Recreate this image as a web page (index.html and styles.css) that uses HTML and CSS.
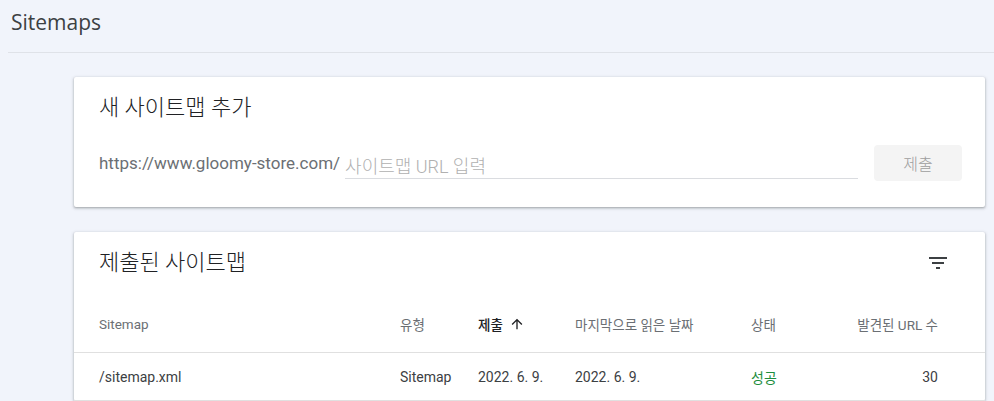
FILE: index.html
```html
<!DOCTYPE html>
<html lang="ko">
<head>
<meta charset="utf-8">
<title>Sitemaps</title>
<link rel="stylesheet" href="styles.css">
</head>
<body>
<header class="page-header">
  <h1 class="page-title">Sitemaps</h1>
</header>
<main class="content">
  <section class="card add-card">
    <h2 class="card-title">새 사이트맵 추가</h2>
    <div class="add-row">
      <span class="base-url">https://www.gloomy-store.com/</span>
      <div class="input-wrap"><input class="url-input" type="text" placeholder="사이트맵 URL 입력"></div>
      <button class="submit-btn" type="button">제출</button>
    </div>
  </section>
  <section class="card list-card">
    <div class="list-head">
      <h2 class="card-title">제출된 사이트맵</h2>
      <span class="filter-btn">
        <svg width="24" height="24" viewBox="0 0 24 24"><path d="M10 18h4v-2h-4v2zM3 6v2h18V6H3zm3 7h12v-2H6v2z" fill="#3c4043"/></svg>
      </span>
    </div>
    <div class="table">
      <div class="trow thead">
        <span class="cell">Sitemap</span>
        <span class="cell">유형</span>
        <span class="cell sorted">제출
          <svg class="sort-arrow" width="16" height="16" viewBox="0 0 24 24"><path d="M4 12l1.41 1.41L11 7.83V20h2V7.83l5.58 5.59L20 12l-8-8-8 8z" fill="#202124"/></svg>
        </span>
        <span class="cell">마지막으로 읽은 날짜</span>
        <span class="cell">상태</span>
        <span class="cell num">발견된 URL 수</span>
      </div>
      <div class="trow tbody">
        <span class="cell">/sitemap.xml</span>
        <span class="cell">Sitemap</span>
        <span class="cell">2022. 6. 9.</span>
        <span class="cell">2022. 6. 9.</span>
        <span class="cell ok">성공</span>
        <span class="cell num">30</span>
      </div>
    </div>
  </section>
</main>
</body>
</html>
```

FILE: styles.css
```css
* { box-sizing: border-box; }
html, body { margin: 0; padding: 0; }
body {
  background: #f1f4fb;
  font-family: Roboto, "Noto Sans CJK KR", sans-serif;
  color: #202124;
  width: 994px;
  height: 401px;
  overflow: hidden;
}
.page-header {
  margin-left: 8px;
  height: 53px;
  border-bottom: 1px solid #dfe2e8;
  padding: 8px 0 0 3px;
}
.page-title {
  margin: 0;
  font-family: "Open Sans", Roboto, sans-serif;
  font-weight: 500;
  font-size: 21px;
  line-height: 28px;
  color: #3c4043;
}
.content {
  padding: 24px 9px 0 74px;
  display: flex;
  flex-direction: column;
  gap: 25px;
}
.card {
  background: #fff;
  border-radius: 2px;
  box-shadow: 0 1px 2px rgba(60,64,67,.3), 0 1px 3px 1px rgba(60,64,67,.15);
}
.add-card {
  height: 130px;
  padding: 17px 23px 0 25px;
}
.card-title {
  margin: 0;
  font-weight: 300;
  font-size: 22px;
  line-height: 28px;
  color: #202124;
}
.add-row {
  margin-top: 23px;
  display: flex;
  align-items: center;
  height: 36px;
}
.base-url {
  font-size: 17px;
  color: #6b6f74;
  margin-right: 5px;
}
.input-wrap {
  flex: 1;
  align-self: stretch;
  display: flex;
  align-items: flex-end;
  padding-bottom: 2px;
}
.url-input {
  width: 100%;
  border: 0;
  border-bottom: 1px solid #dadce0;
  font-family: inherit;
  font-size: 18px;
  color: #202124;
  padding: 0 0 1px 0;
  outline: none;
  background: transparent;
}
.url-input::placeholder { color: #b0b0b0; font-weight: 300; }
.submit-btn {
  margin-left: 16px;
  width: 88px;
  height: 36px;
  border: 0;
  border-radius: 4px;
  background: #f4f4f4;
  color: #9e9e9e;
  font-family: inherit;
  font-size: 16px;
  font-weight: 300;
}
.list-card {
  padding-top: 17px;
}
.list-head {
  display: flex;
  align-items: center;
  justify-content: space-between;
  padding: 0 35px 0 25px;
}
.filter-btn { display: flex; width: 24px; height: 24px; }
.table { margin-top: 19px; }
.trow {
  display: grid;
  grid-template-columns: 301px 78px 97px 176px 1fr auto;
  align-items: center;
  padding: 0 47px 0 25px;
}
.thead {
  height: 57px;
  border-bottom: 1px solid #e0e0e0;
  font-size: 13.5px;
  color: #6b6f74;
}
.tbody {
  height: 48px;
  border-bottom: 1px solid #e0e0e0;
  font-size: 14px;
  color: #3c4043;
}
.cell { white-space: nowrap; }
.num { text-align: right; }
.sorted {
  color: #202124;
  font-weight: 500;
  display: flex;
  align-items: center;
  gap: 6px;
}
.ok { color: #1e8e3e; }
```
